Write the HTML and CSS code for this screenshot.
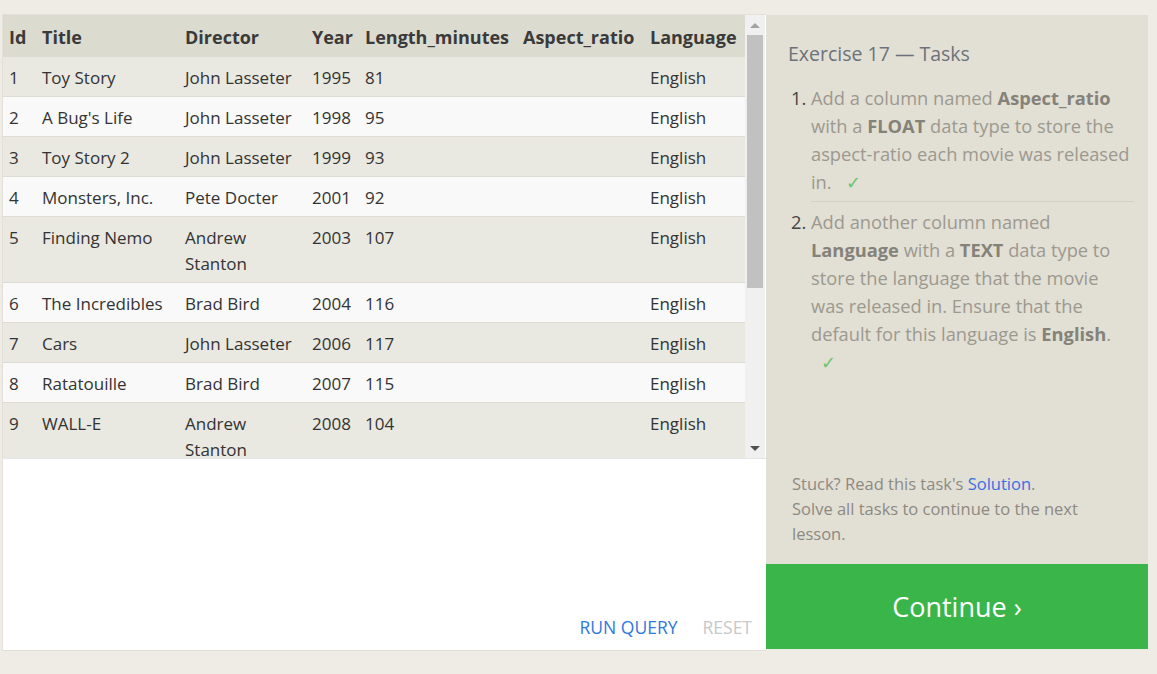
FILE: index.html
```html
<!DOCTYPE html>
<html>
<head>
<meta charset="utf-8">
<link rel="stylesheet" href="styles.css">
</head>
<body>
<div class="page">
  <section class="editor">
    <div class="results">
      <div class="table-wrap">
        <table class="data">
          <colgroup>
            <col class="c-id"><col class="c-title"><col class="c-dir"><col class="c-year"><col class="c-len"><col class="c-asp"><col class="c-lang">
          </colgroup>
          <thead>
            <tr><th>Id</th><th>Title</th><th>Director</th><th>Year</th><th>Length_minutes</th><th>Aspect_ratio</th><th>Language</th></tr>
          </thead>
          <tbody>
            <tr><td>1</td><td>Toy Story</td><td>John Lasseter</td><td>1995</td><td>81</td><td></td><td>English</td></tr>
            <tr><td>2</td><td>A Bug's Life</td><td>John Lasseter</td><td>1998</td><td>95</td><td></td><td>English</td></tr>
            <tr><td>3</td><td>Toy Story 2</td><td>John Lasseter</td><td>1999</td><td>93</td><td></td><td>English</td></tr>
            <tr><td>4</td><td>Monsters, Inc.</td><td>Pete Docter</td><td>2001</td><td>92</td><td></td><td>English</td></tr>
            <tr><td>5</td><td>Finding Nemo</td><td>Andrew Stanton</td><td>2003</td><td>107</td><td></td><td>English</td></tr>
            <tr><td>6</td><td>The Incredibles</td><td>Brad Bird</td><td>2004</td><td>116</td><td></td><td>English</td></tr>
            <tr><td>7</td><td>Cars</td><td>John Lasseter</td><td>2006</td><td>117</td><td></td><td>English</td></tr>
            <tr><td>8</td><td>Ratatouille</td><td>Brad Bird</td><td>2007</td><td>115</td><td></td><td>English</td></tr>
            <tr><td>9</td><td>WALL-E</td><td>Andrew Stanton</td><td>2008</td><td>104</td><td></td><td>English</td></tr>
          </tbody>
        </table>
      </div>
      <div class="scrollbar">
        <div class="arrow up"></div>
        <div class="track"><div class="thumb"></div></div>
        <div class="arrow down"></div>
      </div>
    </div>
    <div class="query-area">
      <div class="actions">
        <span class="btn run">RUN QUERY</span>
        <span class="btn reset">RESET</span>
      </div>
    </div>
  </section>
  <aside class="tasks">
    <div class="tasks-body">
      <h2 class="tasks-title">Exercise 17 — Tasks</h2>
      <ol class="task-list">
        <li>Add a column named <b>Aspect_ratio</b> with a <b>FLOAT</b> data type to store the aspect-ratio each movie was released in. <span class="check">✓</span></li>
        <li>Add another column named <b>Language</b> with a <b>TEXT</b> data type to store the language that the movie was released in. Ensure that the default for this language is <b>English</b>. <span class="check">✓</span></li>
      </ol>
      <p class="hint">Stuck? Read this task's <a class="link">Solution</a>.<br>Solve all tasks to continue to the next lesson.</p>
    </div>
    <div class="continue">Continue ›</div>
  </aside>
</div>
</body>
</html>
```
FILE: styles.css
```css
html, body {
  margin: 0;
  padding: 0;
  background: #efece5;
  font-family: "Open Sans", "Noto Sans", sans-serif;
}
.page {
  display: flex;
  align-items: flex-start;
  padding: 14px 0 0 2px;
  height: 637px;
}
.editor {
  width: 763px;
  height: 635px;
  background: #fff;
  border: 1px solid #e2e0d8;
  border-right: none;
  display: flex;
  flex-direction: column;
}
.results {
  display: flex;
  height: 443px;
  background: #fff;
}
.table-wrap {
  width: 742px;
  overflow: hidden;
}
.data {
  width: 742px;
  table-layout: fixed;
  border-collapse: collapse;
  color: #333;
  font-size: 17px;
}
.c-id { width: 33px; }
.c-title { width: 143px; }
.c-dir { width: 127px; }
.c-year { width: 53px; }
.c-len { width: 158px; }
.c-asp { width: 127px; }
.c-lang { width: 101px; }
.data th {
  background: #dcdbd0;
  text-align: left;
  font-weight: 700;
  font-size: 18px;
  height: 42px;
  padding: 2px 6px 0;
  box-sizing: border-box;
  white-space: nowrap;
  color: #3a3a3a;
}
.data td {
  padding: 8px 6px 5px;
  line-height: 26px;
  vertical-align: top;
  border-bottom: 1px solid #dedcd4;
}
.data tbody tr:nth-child(odd) td { background: #e9e8e1; }
.data tbody tr:nth-child(even) td { background: #f9f9f9; }
.scrollbar {
  width: 20px;
  background: #f0f0f0;
  display: flex;
  flex-direction: column;
  align-items: center;
}
.arrow {
  height: 20px;
  width: 100%;
  display: flex;
  align-items: center;
  justify-content: center;
}
.arrow.up::before {
  content: "";
  border-left: 5px solid transparent;
  border-right: 5px solid transparent;
  border-bottom: 5px solid #a3a3a3;
}
.arrow.down::before {
  content: "";
  border-left: 5px solid transparent;
  border-right: 5px solid transparent;
  border-top: 5px solid #505050;
}
.track {
  flex: 1;
  width: 100%;
  padding: 0 2px;
  box-sizing: border-box;
}
.thumb {
  height: 253px;
  background: #c1c1c1;
}
.query-area {
  flex: 1;
  display: flex;
  flex-direction: column;
  justify-content: flex-end;
  border-top: 1px solid #e6e6e6;
}
.actions {
  display: flex;
  justify-content: flex-end;
  gap: 25px;
  padding: 0 14px 11px 0;
  font-size: 17.5px;
}
.run { color: #2f78e0; }
.reset { color: #c8c8c8; }
.tasks {
  width: 382px;
  height: 634px;
  margin-top: 1px;
  background: #e2dfd5;
  display: flex;
  flex-direction: column;
}
.tasks-body {
  flex: 1;
  padding: 0 14px 0 22px;
  display: flex;
  flex-direction: column;
}
.tasks-title {
  margin: 25px 0 0;
  font-size: 19.5px;
  font-weight: 400;
  color: #6d727a;
  line-height: 28px;
}
.task-list {
  margin: 16px 0 0;
  padding-left: 23px;
  font-size: 18.3px;
  line-height: 28px;
  color: #9c998f;
}
.task-list li::marker { color: #444; }
.task-list li { padding-bottom: 5px; }
.task-list li + li {
  border-top: 1px solid #d3d0c6;
  padding-top: 6px;
}
.task-list b { color: #858279; }
.check {
  display: inline-block;
  color: #6ec46e;
  margin-left: 10px;
}
.hint {
  margin: auto 40px 18px 4px;
  font-size: 16.5px;
  line-height: 25px;
  color: #8d8a82;
}
.link { color: #3a6fe2; }
.continue {
  height: 85px;
  background: #3ab54a;
  color: #fff;
  font-size: 27px;
  display: flex;
  align-items: center;
  justify-content: center;
}
```
